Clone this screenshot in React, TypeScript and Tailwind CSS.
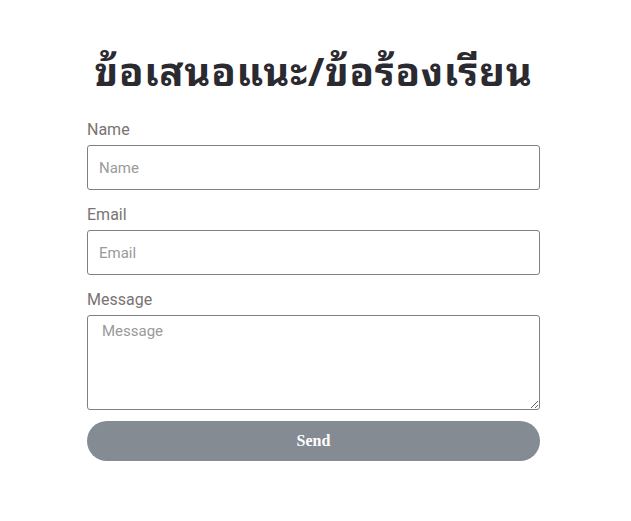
import React from 'react';

export default function App() {
  const labelCls = 'block text-[16px] leading-[19px] text-[#7a7373] mb-[6px]';
  const inputCls =
    'w-full h-[45px] px-[11px] border border-[#7a8288] rounded-[3px] text-[15px] text-[#333] placeholder:text-[#9a9a9a] outline-none bg-white';

  return (
    <div className="min-h-[521px] bg-white" style={{ fontFamily: 'Roboto, "Noto Sans", sans-serif' }}>
      <div className="w-[453px] ml-[87px] pt-[44px]">
        <h1
          className="text-center text-[40px] leading-[48px] tracking-[0.7px] font-bold text-[#2a2a30] mb-[28px]"
          style={{ fontFamily: '"Noto Sans Thai Looped", "Noto Serif Thai", "Tlwg Typo", Loma, Garuda, "Noto Sans Thai", sans-serif' }}
        >
          ข้อเสนอแนะ/ข้อร้องเรียน
        </h1>
        <form className="flex flex-col">
          <label className={labelCls}>Name</label>
          <input type="text" placeholder="Name" className={inputCls} />
          <label className={labelCls + ' mt-[15px]'}>Email</label>
          <input type="email" placeholder="Email" className={inputCls} />
          <label className={labelCls + ' mt-[15px]'}>Message</label>
          <textarea
            placeholder="Message"
            className="w-full h-[95px] px-[14px] py-[4px] border border-[#7a8288] rounded-[3px] text-[15px] text-[#333] placeholder:text-[#9a9a9a] outline-none bg-white resize-y"
          />
          <button
            type="button"
            className="mt-[11px] w-full h-[40px] rounded-full bg-[#848b92] text-white text-[16px] font-bold"
            style={{ fontFamily: '"Liberation Serif", serif' }}
          >
            Send
          </button>
        </form>
      </div>
    </div>
  );
}
